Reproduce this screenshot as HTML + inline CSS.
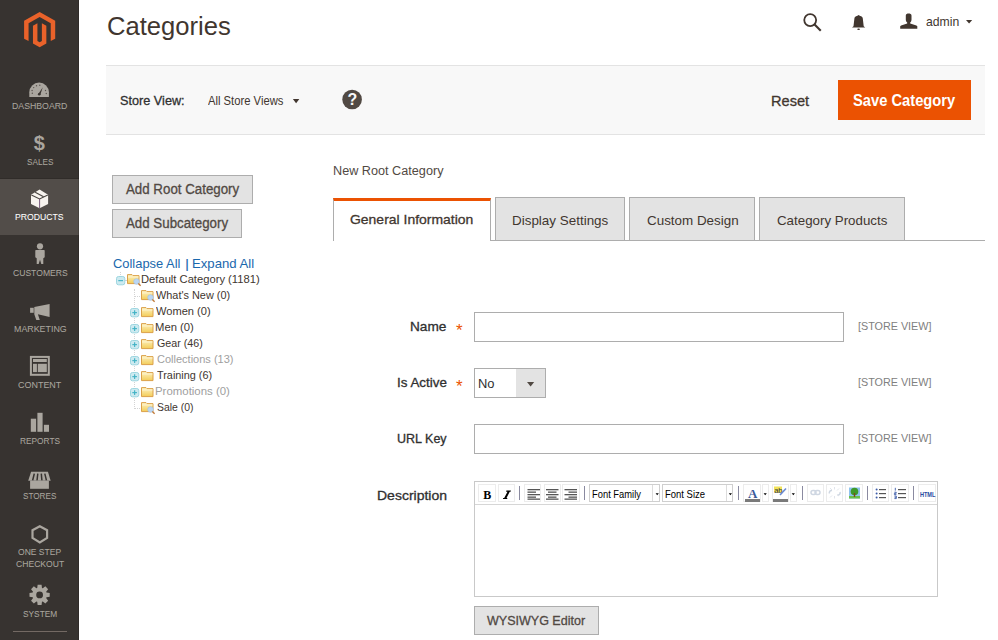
<!DOCTYPE html>
<html><head><meta charset="utf-8"><style>
*{margin:0;padding:0;box-sizing:border-box}
html,body{width:998px;height:640px;overflow:hidden;background:#fff}
body{position:relative;font-family:"Liberation Sans",sans-serif}
.t{position:absolute;white-space:nowrap;line-height:1;transform-origin:0 0;font-family:"Liberation Sans",sans-serif}
.a{position:absolute}
svg{position:absolute;overflow:visible}
</style></head>
<body>
<div class="a" style="left:0px;top:0px;width:79px;height:640px;background:#373330"></div><div class="a" style="left:0px;top:178px;width:79px;height:1px;background:#302c29"></div><div class="a" style="left:0px;top:179px;width:79px;height:56px;background:#524d49"></div><div class="a" style="left:78px;top:0px;width:1px;height:640px;background:rgba(0,0,0,0.14)"></div><div class="a" style="left:13px;top:631px;width:54px;height:1px;background:#736963"></div><svg style="left:0;top:0" width="80" height="60"><g transform="translate(24.1,11.9) scale(0.72,0.705)" fill="#e9622a">
<path d="M21.6 0L0 12.5v25.5l6.2 3.3V16l15.4-8.9L37 16v25.3l6.2-3.3V12.5z"/>
<path d="M24.7 41.1l-3.1 1.8-3.1-1.8V16l-6.2 3.6v25.2l9.3 5.2 9.3-5.2V19.6L24.7 16z"/></g></svg><svg style="left:0;top:0" width="80" height="640">
<path d="M29.3 96.9 V92.2 A9.8 9.6 0 0 1 48.9 92.2 V96.9 Z" fill="#aaa69f"/>
<g fill="#5a544f"><circle cx="36.5" cy="85.7" r="0.7"/><circle cx="39.8" cy="85.3" r="0.7"/><circle cx="33.7" cy="87.6" r="0.7"/><circle cx="32.1" cy="90.5" r="0.7"/><circle cx="32.3" cy="93.2" r="0.7"/><circle cx="45.5" cy="90.5" r="0.7"/><circle cx="46.3" cy="93.5" r="0.7"/></g>
<path d="M38.3 94 L42.8 87.3 L40.3 94.8 Z" fill="#3b3632"/><circle cx="39.2" cy="94.2" r="1.3" fill="#3b3632"/>
</svg><svg style="left:0;top:0" width="80" height="640">
<text x="39.4" y="150.3" font-family="Liberation Sans" font-weight="700" font-size="20" fill="#aaa69f" text-anchor="middle">$</text></svg><svg style="left:0;top:0" width="80" height="640">
<path d="M39.6 189.5 L48.1 194.7 V203.9 L39.6 208.2 L31 203.9 V194.7 Z" fill="#f7f3ee"/>
<path d="M31.4 195 L39.6 199 L47.8 195" stroke="#4a4541" stroke-width="1.1" fill="none"/>
<path d="M35.2 192.3 L43.6 196.8" stroke="#4a4541" stroke-width="1.1" fill="none"/>
<path d="M39.6 199 V208" stroke="#6a4a70" stroke-width="0.9" fill="none"/>
</svg><svg style="left:0;top:0" width="80" height="640">
<circle cx="40" cy="246.3" r="3.1" fill="#aaa69f"/>
<path d="M35.9 250 H44 Q44.7 250 44.7 250.8 V257.3 L43.3 258.3 V264 H41.3 L40 259.8 L38.7 264 H36.7 V258.3 L35.3 257.3 V250.8 Q35.3 250 35.9 250 Z" fill="#aaa69f"/>
</svg><svg style="left:0;top:0" width="80" height="640">
<rect x="30.1" y="307.8" width="3.6" height="5" fill="#aaa69f"/>
<path d="M34.3 306.9 L49.6 303.9 V316.9 L37.9 314.3 L39.8 320 H36.3 L34.3 314.3 Z" fill="#aaa69f"/>
</svg><svg style="left:0;top:0" width="80" height="640">
<rect x="30.9" y="356.9" width="17.9" height="17.9" fill="none" stroke="#aaa69f" stroke-width="2"/>
<rect x="33" y="359" width="13.8" height="3" fill="#aaa69f"/>
<rect x="33" y="363.8" width="3.9" height="8.3" fill="#aaa69f"/>
<rect x="37.8" y="363.8" width="9" height="8.3" fill="#aaa69f"/>
</svg><svg style="left:0;top:0" width="80" height="640">
<rect x="30.8" y="418.7" width="5.3" height="13.1" fill="#aaa69f"/>
<rect x="37.4" y="412.8" width="5.2" height="19" fill="#aaa69f"/>
<rect x="43.9" y="424.8" width="5.1" height="7" fill="#aaa69f"/>
</svg><svg style="left:0;top:0" width="80" height="640">
<path d="M31.1 471.7 H47.9 L50.7 480.7 H28.2 Z" fill="#aaa69f"/>
<g stroke="#373330" stroke-width="1.5"><path d="M34.3 473.6 L32.6 480.5"/><path d="M37.8 473.6 L37 480.5"/><path d="M41.3 473.6 L41.9 480.5"/><path d="M44.8 473.6 L46.5 480.5"/></g>
<rect x="30.1" y="480.7" width="18.8" height="8.1" fill="#aaa69f"/>
</svg><svg style="left:0;top:0" width="80" height="640">
<path d="M39.8 526.2 L47.1 530.2 V538 L39.8 542.4 L32.5 538 V530.2 Z" fill="none" stroke="#aaa69f" stroke-width="2.2"/>
</svg><svg style="left:0;top:0" width="80" height="640">
<path d="M37.22,588.00 L37.63,584.79 L41.57,584.79 L41.98,588.00 L42.80,588.34 L45.36,586.36 L48.14,589.14 L46.16,591.70 L46.50,592.52 L49.71,592.93 L49.71,596.87 L46.50,597.28 L46.16,598.10 L48.14,600.66 L45.36,603.44 L42.80,601.46 L41.98,601.80 L41.57,605.01 L37.63,605.01 L37.22,601.80 L36.40,601.46 L33.84,603.44 L31.06,600.66 L33.04,598.10 L32.70,597.28 L29.49,596.87 L29.49,592.93 L32.70,592.52 L33.04,591.70 L31.06,589.14 L33.84,586.36 L36.40,588.34 Z M43.0,594.9 A3.4 3.4 0 1 0 36.2,594.9 A3.4 3.4 0 1 0 43.0,594.9 Z" fill="#aaa69f" fill-rule="evenodd"/>
</svg><svg style="left:0;top:0" width="998" height="60">
<circle cx="810.2" cy="20.1" r="5.95" fill="none" stroke="#41362f" stroke-width="1.8"/>
<path d="M814.6 24.5 L820 29.9" stroke="#41362f" stroke-width="2.1" stroke-linecap="square"/>
<path d="M858.6 14.9 L860.2 16.1 C861.8 16.5 862.7 17.2 862.8 18.6 L863.7 26.3 L865.2 27.6 H852 L853.5 26.3 L854.4 18.6 C854.5 17.2 855.4 16.5 857 16.1 Z" fill="#41362f"/>
<ellipse cx="858.6" cy="29.3" rx="1.4" ry="0.8" fill="#41362f"/>
<path d="M905.8 15.5 C905.8 14 907.2 13.6 908.6 13.6 C910 13.6 911.5 14 911.5 15.5 V19.8 C911.5 21 910.8 22 910.2 22.6 V23.6 L916.4 25.4 L917.3 26.3 V28.7 H900.2 V26.3 L901.1 25.4 L907.2 23.6 V22.6 C906.5 22 905.8 21 905.8 19.8 Z" fill="#41362f"/>
<path d="M966 20 H972.2 L969.1 23.6 Z" fill="#41362f"/>
</svg><div class="a" style="left:106px;top:65px;width:879px;height:70px;background:#f8f8f8;border-top:1px solid #e3e3e3;border-bottom:1px solid #e3e3e3"></div><svg style="left:0;top:0" width="998" height="140">
<path d="M292.9 99 H299.3 L296.1 103.2 Z" fill="#41362f"/>
<circle cx="352.1" cy="99.5" r="9.8" fill="#514943"/>
<text x="352.3" y="105.3" font-family="Liberation Sans" font-weight="700" font-size="16" fill="#f8f8f8" text-anchor="middle">?</text>
</svg><div class="a" style="left:838px;top:80px;width:133px;height:40px;background:#eb5202;border:1px solid #eb5202"></div><div class="a" style="left:112px;top:175px;width:141px;height:29px;background:#e3e3e3;border:1px solid #adadad"></div><div class="a" style="left:112px;top:209px;width:130px;height:29px;background:#e3e3e3;border:1px solid #adadad"></div><div class="a" style="left:119.5px;top:272px;width:1px;height:3px;border-left:1px dotted #d4d4d4"></div><div class="a" style="left:124.5px;top:280px;width:2px;height:1px;border-top:1px dotted #d4d4d4"></div><div class="a" style="left:134px;top:289px;width:1px;height:120px;border-left:1px dotted #d4d4d4"></div><div class="a" style="left:135px;top:296px;width:5px;height:1px;border-top:1px dotted #d4d4d4"></div><div class="a" style="left:135px;top:408px;width:5px;height:1px;border-top:1px dotted #d4d4d4"></div><svg style="left:115.5px;top:275.8px" width="10" height="10">
<rect x="0.5" y="0.5" width="8.3" height="8.3" rx="2" fill="#cdeaf0" stroke="#9dd6e0" stroke-width="1"/>
<path d="M2.3 4.65 H7" stroke="#3fb1c4" stroke-width="1.1"/></svg><svg style="left:127px;top:273.5px" width="16" height="14">
<defs><linearGradient id="fg127273.5" x1="0" y1="0" x2="0" y2="1"><stop offset="0" stop-color="#fdf3c4"/><stop offset="1" stop-color="#f3cc58"/></linearGradient></defs>
<path d="M0.5 0.6 H5 L6 1.6 H12 V9.6 H0.5 Z" fill="url(#fg127273.5)" stroke="#dba14a" stroke-width="1"/>
<path d="M1 3 H11.5" stroke="#fff6d8" stroke-width="0.8"/><circle cx="9.5" cy="7.5" r="2.8" fill="#bcd6f2" stroke="#9bbde2" stroke-width="0.6"/><path d="M11.4 9.5 L13.6 11.7" stroke="#c07a3a" stroke-width="1.4"/></svg><svg style="left:141px;top:289.7px" width="16" height="14">
<defs><linearGradient id="fg141289.7" x1="0" y1="0" x2="0" y2="1"><stop offset="0" stop-color="#fdf3c4"/><stop offset="1" stop-color="#f3cc58"/></linearGradient></defs>
<path d="M0.5 0.6 H5 L6 1.6 H12 V9.6 H0.5 Z" fill="url(#fg141289.7)" stroke="#dba14a" stroke-width="1"/>
<path d="M1 3 H11.5" stroke="#fff6d8" stroke-width="0.8"/><circle cx="9.5" cy="7.5" r="2.8" fill="#bcd6f2" stroke="#9bbde2" stroke-width="0.6"/><path d="M11.4 9.5 L13.6 11.7" stroke="#c07a3a" stroke-width="1.4"/></svg><svg style="left:129.8px;top:307.5px" width="10" height="10">
<rect x="0.5" y="0.5" width="8.3" height="8.3" rx="2" fill="#cdeaf0" stroke="#9dd6e0" stroke-width="1"/>
<path d="M2.3 4.65 H7" stroke="#3fb1c4" stroke-width="1.1"/><path d="M4.65 2.3 V7" stroke="#3fb1c4" stroke-width="1.1"/></svg><svg style="left:141px;top:306.7px" width="16" height="14">
<defs><linearGradient id="fg141306.7" x1="0" y1="0" x2="0" y2="1"><stop offset="0" stop-color="#fdf3c4"/><stop offset="1" stop-color="#f3cc58"/></linearGradient></defs>
<path d="M0.5 0.6 H5 L6 1.6 H12 V9.6 H0.5 Z" fill="url(#fg141306.7)" stroke="#dba14a" stroke-width="1"/>
<path d="M1 3 H11.5" stroke="#fff6d8" stroke-width="0.8"/></svg><svg style="left:129.8px;top:323.5px" width="10" height="10">
<rect x="0.5" y="0.5" width="8.3" height="8.3" rx="2" fill="#cdeaf0" stroke="#9dd6e0" stroke-width="1"/>
<path d="M2.3 4.65 H7" stroke="#3fb1c4" stroke-width="1.1"/><path d="M4.65 2.3 V7" stroke="#3fb1c4" stroke-width="1.1"/></svg><svg style="left:141px;top:322.7px" width="16" height="14">
<defs><linearGradient id="fg141322.7" x1="0" y1="0" x2="0" y2="1"><stop offset="0" stop-color="#fdf3c4"/><stop offset="1" stop-color="#f3cc58"/></linearGradient></defs>
<path d="M0.5 0.6 H5 L6 1.6 H12 V9.6 H0.5 Z" fill="url(#fg141322.7)" stroke="#dba14a" stroke-width="1"/>
<path d="M1 3 H11.5" stroke="#fff6d8" stroke-width="0.8"/></svg><svg style="left:129.8px;top:339.5px" width="10" height="10">
<rect x="0.5" y="0.5" width="8.3" height="8.3" rx="2" fill="#cdeaf0" stroke="#9dd6e0" stroke-width="1"/>
<path d="M2.3 4.65 H7" stroke="#3fb1c4" stroke-width="1.1"/><path d="M4.65 2.3 V7" stroke="#3fb1c4" stroke-width="1.1"/></svg><svg style="left:141px;top:338.7px" width="16" height="14">
<defs><linearGradient id="fg141338.7" x1="0" y1="0" x2="0" y2="1"><stop offset="0" stop-color="#fdf3c4"/><stop offset="1" stop-color="#f3cc58"/></linearGradient></defs>
<path d="M0.5 0.6 H5 L6 1.6 H12 V9.6 H0.5 Z" fill="url(#fg141338.7)" stroke="#dba14a" stroke-width="1"/>
<path d="M1 3 H11.5" stroke="#fff6d8" stroke-width="0.8"/></svg><svg style="left:129.8px;top:355.5px" width="10" height="10">
<rect x="0.5" y="0.5" width="8.3" height="8.3" rx="2" fill="#cdeaf0" stroke="#9dd6e0" stroke-width="1"/>
<path d="M2.3 4.65 H7" stroke="#3fb1c4" stroke-width="1.1"/><path d="M4.65 2.3 V7" stroke="#3fb1c4" stroke-width="1.1"/></svg><svg style="left:141px;top:354.7px" width="16" height="14">
<defs><linearGradient id="fg141354.7" x1="0" y1="0" x2="0" y2="1"><stop offset="0" stop-color="#fdf3c4"/><stop offset="1" stop-color="#f3cc58"/></linearGradient></defs>
<path d="M0.5 0.6 H5 L6 1.6 H12 V9.6 H0.5 Z" fill="url(#fg141354.7)" stroke="#dba14a" stroke-width="1"/>
<path d="M1 3 H11.5" stroke="#fff6d8" stroke-width="0.8"/></svg><svg style="left:129.8px;top:371.5px" width="10" height="10">
<rect x="0.5" y="0.5" width="8.3" height="8.3" rx="2" fill="#cdeaf0" stroke="#9dd6e0" stroke-width="1"/>
<path d="M2.3 4.65 H7" stroke="#3fb1c4" stroke-width="1.1"/><path d="M4.65 2.3 V7" stroke="#3fb1c4" stroke-width="1.1"/></svg><svg style="left:141px;top:370.7px" width="16" height="14">
<defs><linearGradient id="fg141370.7" x1="0" y1="0" x2="0" y2="1"><stop offset="0" stop-color="#fdf3c4"/><stop offset="1" stop-color="#f3cc58"/></linearGradient></defs>
<path d="M0.5 0.6 H5 L6 1.6 H12 V9.6 H0.5 Z" fill="url(#fg141370.7)" stroke="#dba14a" stroke-width="1"/>
<path d="M1 3 H11.5" stroke="#fff6d8" stroke-width="0.8"/></svg><svg style="left:129.8px;top:387.5px" width="10" height="10">
<rect x="0.5" y="0.5" width="8.3" height="8.3" rx="2" fill="#cdeaf0" stroke="#9dd6e0" stroke-width="1"/>
<path d="M2.3 4.65 H7" stroke="#3fb1c4" stroke-width="1.1"/><path d="M4.65 2.3 V7" stroke="#3fb1c4" stroke-width="1.1"/></svg><svg style="left:141px;top:386.7px" width="16" height="14">
<defs><linearGradient id="fg141386.7" x1="0" y1="0" x2="0" y2="1"><stop offset="0" stop-color="#fdf3c4"/><stop offset="1" stop-color="#f3cc58"/></linearGradient></defs>
<path d="M0.5 0.6 H5 L6 1.6 H12 V9.6 H0.5 Z" fill="url(#fg141386.7)" stroke="#dba14a" stroke-width="1"/>
<path d="M1 3 H11.5" stroke="#fff6d8" stroke-width="0.8"/></svg><svg style="left:141px;top:401.5px" width="16" height="14">
<defs><linearGradient id="fg141401.5" x1="0" y1="0" x2="0" y2="1"><stop offset="0" stop-color="#fdf3c4"/><stop offset="1" stop-color="#f3cc58"/></linearGradient></defs>
<path d="M0.5 0.6 H5 L6 1.6 H12 V9.6 H0.5 Z" fill="url(#fg141401.5)" stroke="#dba14a" stroke-width="1"/>
<path d="M1 3 H11.5" stroke="#fff6d8" stroke-width="0.8"/><circle cx="9.5" cy="7.5" r="2.8" fill="#bcd6f2" stroke="#9bbde2" stroke-width="0.6"/><path d="M11.4 9.5 L13.6 11.7" stroke="#c07a3a" stroke-width="1.4"/></svg><div class="a" style="left:333px;top:240px;width:652px;height:1px;background:#adadad"></div><div class="a" style="left:333px;top:198px;width:158px;height:43px;background:#fff;border-left:1px solid #adadad;border-right:1px solid #adadad;border-top:3px solid #eb5202"></div><div class="a" style="left:495px;top:197px;width:130px;height:44px;background:#e3e3e3;border:1px solid #adadad"></div><div class="a" style="left:629px;top:197px;width:126px;height:44px;background:#e3e3e3;border:1px solid #adadad"></div><div class="a" style="left:759px;top:197px;width:146px;height:44px;background:#e3e3e3;border:1px solid #adadad"></div><div class="a" style="left:474px;top:312px;width:370px;height:30px;background:#fff;border:1px solid #adadad"></div><div class="a" style="left:474px;top:368px;width:72px;height:30px;background:#fff;border:1px solid #adadad"></div><div class="a" style="left:516px;top:369px;width:29px;height:28px;background:#e3e3e3"></div><svg style="left:0;top:0" width="998" height="640">
<path d="M527 382 H534.2 L530.6 386.4 Z" fill="#514943"/>
</svg><div class="a" style="left:474px;top:424px;width:370px;height:30px;background:#fff;border:1px solid #adadad"></div><div class="t" style="left:456px;top:322px;font-size:17px;color:#eb5202">*</div><div class="t" style="left:456px;top:378px;font-size:17px;color:#eb5202">*</div><div class="a" style="left:474px;top:481px;width:464px;height:116px;background:#fff;border:1px solid #c9c9c9"></div><div class="a" style="left:475px;top:504px;width:462px;height:1px;background:#d6d6d6"></div><div class="a" style="left:478.2px;top:484.3px;width:17.400000000000034px;height:17.3px;border:1px solid #ececec;background:#fff"></div><div class="a" style="left:497.5px;top:484.3px;width:17.299999999999955px;height:17.3px;border:1px solid #ececec;background:#fff"></div><div class="a" style="left:524.3px;top:484.3px;width:17.200000000000045px;height:17.3px;border:1px solid #ececec;background:#fff"></div><div class="a" style="left:543.5px;top:484.3px;width:17.200000000000045px;height:17.3px;border:1px solid #ececec;background:#fff"></div><div class="a" style="left:562.3px;top:484.3px;width:17.300000000000068px;height:17.3px;border:1px solid #ececec;background:#fff"></div><div class="a" style="left:743.2px;top:484.3px;width:17.59999999999991px;height:17.3px;border:1px solid #ececec;background:#fff"></div><div class="a" style="left:761.6px;top:484.3px;width:7.199999999999932px;height:17.3px;border:1px solid #ececec;background:#fff"></div><div class="a" style="left:771.5px;top:484.3px;width:17.399999999999977px;height:17.3px;border:1px solid #ececec;background:#fff"></div><div class="a" style="left:789.7px;top:484.3px;width:7.199999999999932px;height:17.3px;border:1px solid #ececec;background:#fff"></div><div class="a" style="left:807.3px;top:484.3px;width:17.100000000000023px;height:17.3px;border:1px solid #ececec;background:#fff"></div><div class="a" style="left:826.2px;top:484.3px;width:17.09999999999991px;height:17.3px;border:1px solid #ececec;background:#fff"></div><div class="a" style="left:845.3px;top:484.3px;width:17.5px;height:17.3px;border:1px solid #ececec;background:#fff"></div><div class="a" style="left:872.2px;top:484.3px;width:16.699999999999932px;height:17.3px;border:1px solid #ececec;background:#fff"></div><div class="a" style="left:891.2px;top:484.3px;width:17.5px;height:17.3px;border:1px solid #ececec;background:#fff"></div><div class="a" style="left:918.1px;top:484.3px;width:17.699999999999932px;height:17.3px;border:1px solid #ececec;background:#fff"></div><div class="a" style="left:519.4px;top:486px;width:1px;height:14px;background:#8a8aa0"></div><div class="a" style="left:584.4px;top:486px;width:1px;height:14px;background:#8a8aa0"></div><div class="a" style="left:738.4px;top:486px;width:1px;height:14px;background:#8a8aa0"></div><div class="a" style="left:802.2px;top:486px;width:1px;height:14px;background:#8a8aa0"></div><div class="a" style="left:867.3px;top:486px;width:1px;height:14px;background:#8a8aa0"></div><div class="a" style="left:913.3px;top:486px;width:1px;height:14px;background:#8a8aa0"></div><div class="a" style="left:589px;top:484.4px;width:71px;height:17.2px;border:1px solid #cfcfcf;background:#fff"></div><div class="a" style="left:652.4px;top:485px;width:1px;height:16px;background:#dcdcdc"></div><div class="a" style="left:662.2px;top:484.4px;width:71px;height:17.2px;border:1px solid #cfcfcf;background:#fff"></div><div class="a" style="left:725.5px;top:485px;width:1px;height:16px;background:#dcdcdc"></div><svg style="left:0;top:0" width="998" height="640">
<text x="483.2" y="499" font-family="Liberation Serif" font-weight="700" font-size="12" fill="#000">B</text>
<path d="M506.4 490.6 H510.9 L510.6 491.7 H509.7 L506.5 497.9 H507.4 L507.1 499 H502.9 L503.2 497.9 H504.2 L507.5 491.7 H506.1 Z" fill="#000"/>
<g fill="#555">
<rect x="527.5" y="489" width="12.5" height="1.3"/><rect x="527.5" y="491.5" width="8.5" height="1.3"/><rect x="527.5" y="494" width="12.5" height="1.3"/><rect x="527.5" y="496.5" width="8.5" height="1.3"/><rect x="527.5" y="498.5" width="12.5" height="1.3"/>
<rect x="546" y="489" width="12.5" height="1.3"/><rect x="548" y="491.5" width="8.5" height="1.3"/><rect x="546" y="494" width="12.5" height="1.3"/><rect x="548" y="496.5" width="8.5" height="1.3"/><rect x="546" y="498.5" width="12.5" height="1.3"/>
<rect x="564.5" y="489" width="12.5" height="1.3"/><rect x="568.5" y="491.5" width="8.5" height="1.3"/><rect x="564.5" y="494" width="12.5" height="1.3"/><rect x="568.5" y="496.5" width="8.5" height="1.3"/><rect x="564.5" y="498.5" width="12.5" height="1.3"/>
</g>
<path d="M655.6 493.2 H658.8 L657.2 495.2 Z" fill="#000"/>
<path d="M728.8 493.2 H732 L730.4 495.2 Z" fill="#000"/>
<path d="M763.6 493.2 H766.8 L765.2 495.2 Z" fill="#000"/>
<path d="M791.7 493.2 H794.9 L793.3 495.2 Z" fill="#000"/>
<text x="748" y="498" font-family="Liberation Serif" font-weight="700" font-size="13" fill="#3a5a9a">A</text>
<rect x="745" y="499" width="15" height="3" fill="#7a7a7a"/>
<rect x="774" y="486.5" width="8" height="6" fill="#f2e35a"/>
<text x="774.2" y="493" font-family="Liberation Sans" font-size="7.5" fill="#333">ab</text>
<path d="M780 495 L786 488.5" stroke="#6a8ad0" stroke-width="1.6"/>
<rect x="773" y="499" width="15" height="3" fill="#7a7a7a"/>
<g fill="none" stroke="#cfd7e2" stroke-width="1.5"><rect x="811" y="490.5" width="5" height="4" rx="2"/><rect x="815" y="490.5" width="5" height="4" rx="2"/>
<path d="M829.5 493.5 a2.2 2.2 0 0 1 2.5 -3 M840 492 a2.2 2.2 0 0 1 -2.5 3"/></g><g stroke="#d8dde6" stroke-width="0.8"><path d="M834.5 487 V489.5 M834.5 496 V498.5 M830 488 L832 490 M839 496 L837 494.5 M839 488.5 L837 490.5 M830 497.5 L832 495.5"/></g>
<rect x="849" y="487.5" width="11" height="11" fill="#8ec3ee"/>
<circle cx="854.5" cy="491.5" r="3.8" fill="#3e9a2a"/>
<rect x="849" y="496" width="11" height="2.5" fill="#6ac04a"/>
<rect x="853.8" y="493" width="1.4" height="4" fill="#7a4a20"/>
<g fill="#3a5aa8"><circle cx="876.6" cy="489.5" r="1"/><circle cx="876.6" cy="493.5" r="1"/><circle cx="876.6" cy="497.5" r="1"/></g>
<g fill="#555"><rect x="879" y="489" width="7" height="1.2"/><rect x="879" y="493" width="7" height="1.2"/><rect x="879" y="497" width="7" height="1.2"/>
<rect x="898" y="489" width="8" height="1.2"/><rect x="898" y="493" width="8" height="1.2"/><rect x="898" y="497" width="8" height="1.2"/></g>
<g fill="none" stroke="#3a5aa8" stroke-width="0.9"><path d="M895.3 487.8 V490.6"/><path d="M894.4 492.2 H896.2 V493.3 H894.4 V494.6 H896.4"/><path d="M894.4 496 H896.3 V498.6 H894.4 M894.6 497.3 H896.2"/></g>
<text x="919.9" y="496.8" font-family="Liberation Sans" font-weight="700" font-size="7" fill="#2a4aa0" transform="translate(919.9 0) scale(0.8 1) translate(-919.9 0)">HTML</text>
</svg><div class="a" style="left:474px;top:606px;width:125px;height:29px;background:#e3e3e3;border:1px solid #adadad"></div>
<div class="t" style="left:106.52px;top:13.00px;font-size:26px;font-weight:400;color:#41362f;transform:scaleX(0.9847)">Categories</div>
<div class="t" style="left:925.90px;top:15.00px;font-size:13px;font-weight:400;color:#41362f;transform:scaleX(0.9371)">admin</div>
<div class="t" style="left:11.60px;top:101.20px;font-size:9.8px;font-weight:400;color:#aaa69f;-webkit-text-stroke:0.05px #aaa69f;transform:scaleX(0.8919)">DASHBOARD</div>
<div class="t" style="left:26.60px;top:156.90px;font-size:9.8px;font-weight:400;color:#aaa69f;-webkit-text-stroke:0.05px #aaa69f;transform:scaleX(0.8355)">SALES</div>
<div class="t" style="left:15.40px;top:212.20px;font-size:9.8px;font-weight:400;color:#ffffff;-webkit-text-stroke:0.05px #ffffff;transform:scaleX(0.8836)">PRODUCTS</div>
<div class="t" style="left:12.60px;top:268.00px;font-size:9.8px;font-weight:400;color:#aaa69f;-webkit-text-stroke:0.05px #aaa69f;transform:scaleX(0.8758)">CUSTOMERS</div>
<div class="t" style="left:13.50px;top:323.90px;font-size:9.8px;font-weight:400;color:#aaa69f;-webkit-text-stroke:0.05px #aaa69f;transform:scaleX(0.9052)">MARKETING</div>
<div class="t" style="left:18.00px;top:380.00px;font-size:9.8px;font-weight:400;color:#aaa69f;-webkit-text-stroke:0.05px #aaa69f;transform:scaleX(0.9149)">CONTENT</div>
<div class="t" style="left:19.70px;top:435.70px;font-size:9.8px;font-weight:400;color:#aaa69f;-webkit-text-stroke:0.05px #aaa69f;transform:scaleX(0.8489)">REPORTS</div>
<div class="t" style="left:22.90px;top:491.20px;font-size:9.8px;font-weight:400;color:#aaa69f;-webkit-text-stroke:0.05px #aaa69f;transform:scaleX(0.8325)">STORES</div>
<div class="t" style="left:18.20px;top:547.10px;font-size:9.8px;font-weight:400;color:#aaa69f;-webkit-text-stroke:0.05px #aaa69f;transform:scaleX(0.8714)">ONE STEP</div>
<div class="t" style="left:15.50px;top:558.70px;font-size:9.8px;font-weight:400;color:#aaa69f;-webkit-text-stroke:0.05px #aaa69f;transform:scaleX(0.8764)">CHECKOUT</div>
<div class="t" style="left:22.50px;top:609.00px;font-size:9.8px;font-weight:400;color:#aaa69f;-webkit-text-stroke:0.05px #aaa69f;transform:scaleX(0.8500)">SYSTEM</div>
<div class="t" style="left:120.00px;top:94.00px;font-size:13px;font-weight:400;color:#303030;-webkit-text-stroke:0.3px #303030;transform:scaleX(0.9758)">Store View:</div>
<div class="t" style="left:208.00px;top:94.00px;font-size:13px;font-weight:400;color:#41362f;transform:scaleX(0.8644)">All Store Views</div>
<div class="t" style="left:770.53px;top:93.30px;font-size:15px;font-weight:400;color:#41362f;-webkit-text-stroke:0.3px #41362f;transform:scaleX(0.9744)">Reset</div>
<div class="t" style="left:853.30px;top:93.10px;font-size:16px;font-weight:700;color:#ffffff;transform:scaleX(0.9198)">Save Category</div>
<div class="t" style="left:125.80px;top:182.30px;font-size:14px;font-weight:400;color:#514943;-webkit-text-stroke:0.3px #514943;transform:scaleX(0.9504)">Add Root Category</div>
<div class="t" style="left:125.80px;top:216.00px;font-size:14px;font-weight:400;color:#514943;-webkit-text-stroke:0.3px #514943;transform:scaleX(0.9500)">Add Subcategory</div>
<div class="t" style="left:112.80px;top:256.70px;font-size:13px;font-weight:400;color:#1a68ad;transform:scaleX(0.9925)">Collapse All</div>
<div class="t" style="left:184.60px;top:256.70px;font-size:13px;font-weight:400;color:#1a68ad;transform:scaleX(1.2000)">|</div>
<div class="t" style="left:192.49px;top:256.70px;font-size:13px;font-weight:400;color:#1a68ad;transform:scaleX(1.0117)">Expand All</div>
<div class="t" style="left:141.48px;top:274.00px;font-size:11px;font-weight:400;color:#41362f;transform:scaleX(1.0174)">Default Category (1181)</div>
<div class="t" style="left:156.30px;top:290.00px;font-size:11px;font-weight:400;color:#41362f;transform:scaleX(0.9907)">What's New (0)</div>
<div class="t" style="left:156.30px;top:306.00px;font-size:11px;font-weight:400;color:#41362f;transform:scaleX(1.0074)">Women (0)</div>
<div class="t" style="left:155.28px;top:322.00px;font-size:11px;font-weight:400;color:#41362f;transform:scaleX(1.0243)">Men (0)</div>
<div class="t" style="left:156.50px;top:338.00px;font-size:11px;font-weight:400;color:#41362f;transform:scaleX(0.9723)">Gear (46)</div>
<div class="t" style="left:156.50px;top:354.00px;font-size:11px;font-weight:400;color:#a0a0a0;transform:scaleX(1.0013)">Collections (13)</div>
<div class="t" style="left:156.50px;top:370.00px;font-size:11px;font-weight:400;color:#41362f;transform:scaleX(0.9875)">Training (6)</div>
<div class="t" style="left:155.46px;top:386.00px;font-size:11px;font-weight:400;color:#a0a0a0;transform:scaleX(1.0380)">Promotions (0)</div>
<div class="t" style="left:156.50px;top:402.00px;font-size:11px;font-weight:400;color:#41362f;transform:scaleX(0.9500)">Sale (0)</div>
<div class="t" style="left:332.69px;top:165.00px;font-size:12.5px;font-weight:400;color:#514943;transform:scaleX(1.0130)">New Root Category</div>
<div class="t" style="left:350.30px;top:213.00px;font-size:13.5px;font-weight:400;color:#41362f;-webkit-text-stroke:0.3px #41362f;transform:scaleX(1.0336)">General Information</div>
<div class="t" style="left:511.61px;top:214.00px;font-size:13.5px;font-weight:400;color:#41362f;transform:scaleX(0.9948)">Display Settings</div>
<div class="t" style="left:646.50px;top:214.00px;font-size:13.5px;font-weight:400;color:#41362f;transform:scaleX(0.9924)">Custom Design</div>
<div class="t" style="left:776.50px;top:214.00px;font-size:13.5px;font-weight:400;color:#41362f;transform:scaleX(0.9866)">Category Products</div>
<div class="t" style="left:410.20px;top:320.00px;font-size:13px;font-weight:400;color:#303030;-webkit-text-stroke:0.3px #303030;transform:scaleX(1.0485)">Name</div>
<div class="t" style="left:396.57px;top:376.30px;font-size:13px;font-weight:400;color:#303030;-webkit-text-stroke:0.3px #303030;transform:scaleX(1.0312)">Is Active</div>
<div class="t" style="left:397.04px;top:432.30px;font-size:13px;font-weight:400;color:#303030;-webkit-text-stroke:0.3px #303030;transform:scaleX(0.9627)">URL Key</div>
<div class="t" style="left:376.62px;top:489.30px;font-size:13px;font-weight:400;color:#303030;-webkit-text-stroke:0.3px #303030;transform:scaleX(1.0766)">Description</div>
<div class="t" style="left:857.80px;top:320.80px;font-size:11px;font-weight:400;color:#808080;transform:scaleX(0.9800)">[STORE VIEW]</div>
<div class="t" style="left:857.80px;top:377.00px;font-size:11px;font-weight:400;color:#808080;transform:scaleX(0.9800)">[STORE VIEW]</div>
<div class="t" style="left:857.80px;top:433.30px;font-size:11px;font-weight:400;color:#808080;transform:scaleX(0.9800)">[STORE VIEW]</div>
<div class="t" style="left:478.41px;top:376.60px;font-size:13px;font-weight:400;color:#303030;transform:scaleX(0.9938)">No</div>
<div class="t" style="left:487.40px;top:613.50px;font-size:13px;font-weight:400;color:#514943;-webkit-text-stroke:0.3px #514943;transform:scaleX(0.9627)">WYSIWYG Editor</div>
<div class="t" style="left:592.35px;top:488.50px;font-size:11px;font-weight:400;color:#000000;transform:scaleX(0.8509)">Font Family</div>
<div class="t" style="left:665.34px;top:488.50px;font-size:11px;font-weight:400;color:#000000;transform:scaleX(0.8622)">Font Size</div>
</body></html>
